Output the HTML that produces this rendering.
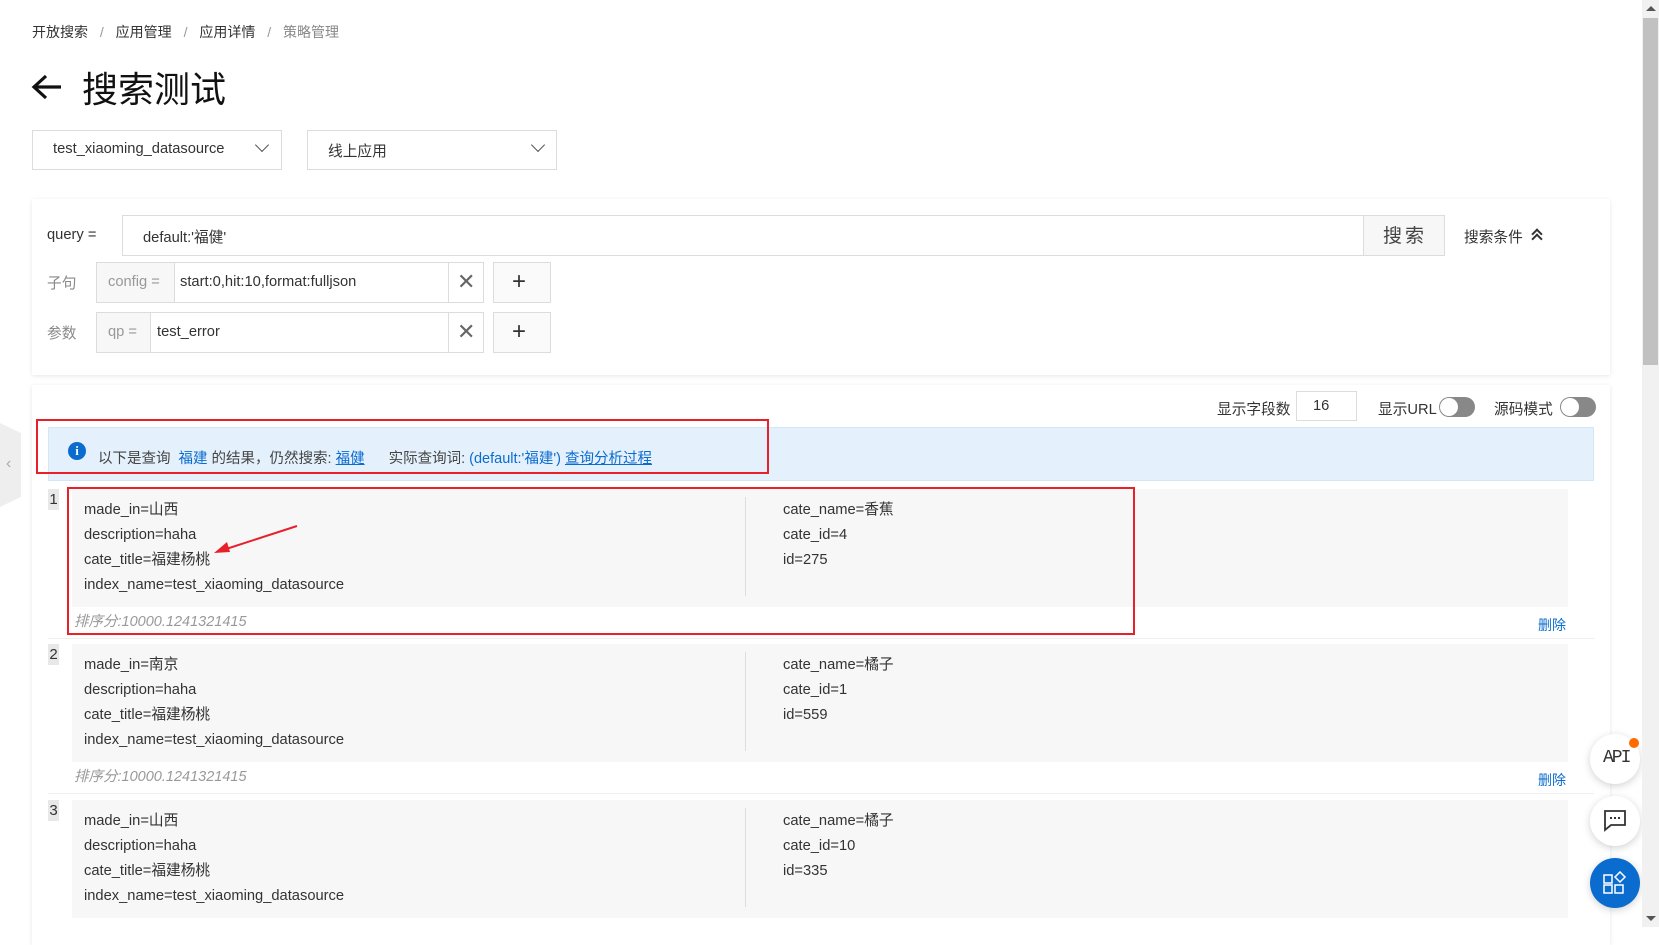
<!DOCTYPE html>
<html><head><meta charset="utf-8"><style>
*{box-sizing:border-box;margin:0;padding:0}
body{width:1659px;height:927px;overflow:hidden;background:#fff;font-family:"Liberation Sans","Noto Sans CJK SC",sans-serif;color:#333;font-size:14.7px;position:relative}
.a{position:absolute}
.box{position:absolute;border:1px solid #dcdcdc;background:#fff}
.chev{position:absolute;width:10px;height:10px;border-right:1.6px solid #555;border-bottom:1.6px solid #555;transform:rotate(45deg)}
.t{position:absolute;white-space:nowrap}
.card{position:absolute;left:72px;width:1496px;height:118px;background:#f7f7f7}
.num{position:absolute;left:48px;width:11px;height:21px;background:#e8e8e8;font-size:15px;line-height:21px;text-align:center;color:#333}
.x{position:absolute;font-size:22px;color:#666;line-height:1}
.tog{position:absolute;width:36px;height:20px;border-radius:10px;background:#888}
.tog:after{content:"";position:absolute;left:1px;top:1px;width:18px;height:18px;border-radius:50%;background:#fff}
.fb{position:absolute;width:50px;height:50px;border-radius:50%;background:#fff;box-shadow:0 2px 8px rgba(0,0,0,.18)}
.sc{position:absolute;left:74px;font-style:italic;color:#999;font-size:14.5px;white-space:nowrap}
</style></head><body>
<div class="t" style="left:32px;top:22px;font-size:14px;color:#333">开放搜索 <span style="color:#999;margin:0 8px">/</span> 应用管理 <span style="color:#999;margin:0 8px">/</span> 应用详情 <span style="color:#999;margin:0 8px">/</span> <span style="color:#888">策略管理</span></div>
<svg class="a" style="left:31px;top:73px" width="32" height="28" viewBox="0 0 32 28"><path d="M30 14H4M15 3L3 14l12 11" fill="none" stroke="#111" stroke-width="3.2"/></svg>
<div class="t" style="left:82px;top:61px;font-size:36px;color:#111">搜索测试</div>

<div class="box" style="left:32px;top:130px;width:250px;height:40px"></div>
<div class="t" style="left:53px;top:141px">test_xiaoming_datasource</div>
<div class="chev" style="left:257px;top:140px"></div>
<div class="box" style="left:307px;top:130px;width:250px;height:40px"></div>
<div class="t" style="left:328px;top:140px">线上应用</div>
<div class="chev" style="left:533px;top:140px"></div>

<div class="a" style="left:32px;top:199px;width:1578px;height:176px;background:#fff;box-shadow:0 1px 4px rgba(0,0,0,.1)"></div>
<div class="t" style="left:47px;top:227px">query =</div>
<div class="box" style="left:122px;top:215px;width:1242px;height:41px"></div>
<div class="t" style="left:143px;top:226px">default:'福健'</div>
<div class="box" style="left:1363px;top:215px;width:82px;height:41px;background:#f7f7f7"></div>
<div class="t" style="left:1383px;top:221px;font-size:19px;letter-spacing:3px;color:#444">搜索</div>
<div class="t" style="left:1464px;top:226px">搜索条件</div>
<div class="a" style="left:1533px;top:230px;width:8px;height:8px;border-left:2px solid #333;border-top:2px solid #333;transform:rotate(45deg)"></div>
<div class="a" style="left:1533px;top:235px;width:8px;height:8px;border-left:2px solid #333;border-top:2px solid #333;transform:rotate(45deg)"></div>

<div class="t" style="left:47px;top:272px;color:#888">子句</div>
<div class="box" style="left:96px;top:262px;width:388px;height:41px"></div>
<div class="a" style="left:97px;top:263px;width:78px;height:39px;background:#f7f7f7;border-right:1px solid #dcdcdc"></div>
<div class="t" style="left:108px;top:274px;color:#999">config =</div>
<div class="t" style="left:180px;top:274px">start:0,hit:10,format:fulljson</div>
<div class="a" style="left:448px;top:263px;width:1px;height:39px;background:#dcdcdc"></div>
<div class="x" style="left:457px;top:271px">✕</div>
<div class="box" style="left:493px;top:262px;width:58px;height:41px;background:#fafafa"></div>
<div class="t" style="left:512px;top:268px;font-size:24px;color:#333">+</div>

<div class="t" style="left:47px;top:322px;color:#888">参数</div>
<div class="box" style="left:96px;top:312px;width:388px;height:41px"></div>
<div class="a" style="left:97px;top:313px;width:54px;height:39px;background:#f7f7f7;border-right:1px solid #dcdcdc"></div>
<div class="t" style="left:108px;top:324px;color:#999">qp =</div>
<div class="t" style="left:157px;top:324px">test_error</div>
<div class="a" style="left:448px;top:313px;width:1px;height:39px;background:#dcdcdc"></div>
<div class="x" style="left:457px;top:321px">✕</div>
<div class="box" style="left:493px;top:312px;width:58px;height:41px;background:#fafafa"></div>
<div class="t" style="left:512px;top:318px;font-size:24px;color:#333">+</div>

<div class="a" style="left:32px;top:385px;width:1578px;height:560px;background:#fff;box-shadow:0 1px 4px rgba(0,0,0,.1)"></div>
<div class="a" style="left:0;top:423px;width:21px;height:84px;background:#eee;clip-path:polygon(0 0,100% 12%,100% 88%,0 100%)"></div>
<div class="t" style="left:6px;top:455px;color:#aaa;font-size:16px">‹</div>
<div class="t" style="left:1217px;top:398px">显示字段数</div>
<div class="box" style="left:1296px;top:391px;width:61px;height:30px"></div>
<div class="t" style="left:1313px;top:398px">16</div>
<div class="t" style="left:1378px;top:398px">显示URL</div>
<div class="tog" style="left:1439px;top:397px"></div>
<div class="t" style="left:1494px;top:398px">源码模式</div>
<div class="tog" style="left:1560px;top:397px"></div>

<div class="a" style="left:48px;top:427px;width:1546px;height:54px;background:#e4f1fc;border:1px solid #d5e6f5"></div>
<div class="a" style="left:68px;top:442px;width:18px;height:18px;border-radius:50%;background:#0a6ccf;color:#fff;font-size:13px;font-weight:bold;text-align:center;line-height:18px;font-family:'Liberation Serif',serif">i</div>
<div class="t" style="left:98px;top:447px;color:#444;font-size:14.5px">以下是查询 <span style="color:#0a6ccf;margin:0 4px">福建</span>的结果，仍然搜索: <span style="color:#0a6ccf;text-decoration:underline">福健</span><span style="margin-left:24px">实际查询词:</span> <span style="color:#0a6ccf">(default:'福建')</span> <span style="color:#0a6ccf;text-decoration:underline">查询分析过程</span></div>
<div class="a" style="left:36px;top:419px;width:733px;height:55px;border:2px solid #e8202a"></div>

<div class="num" style="top:489px">1</div>
<div class="card" style="top:489px"></div>
<div class="a" style="left:745px;top:497px;width:1px;height:99px;background:#ddd"></div>
<div class="t" style="left:84px;top:498px;line-height:25px">made_in=山西<br>description=haha<br>cate_title=福建杨桃<br>index_name=test_xiaoming_datasource</div>
<div class="t" style="left:783px;top:498px;line-height:25px">cate_name=香蕉<br>cate_id=4<br>id=275</div>
<div class="sc" style="top:610px">排序分:10000.1241321415</div>
<div class="t" style="left:1538px;top:615px;color:#0a6ccf;font-size:14px">删除</div>
<div class="a" style="left:48px;top:638px;width:1546px;height:1px;background:#eee"></div>
<div class="a" style="left:67px;top:487px;width:1068px;height:148px;border:2px solid #e8202a"></div>
<svg class="a" style="left:205px;top:520px" width="100" height="40"><path d="M92 6L18 30" stroke="#e8202a" stroke-width="2"/><path d="M9 33L22 22L25 32Z" fill="#e8202a"/></svg>

<div class="num" style="top:644px">2</div>
<div class="card" style="top:644px"></div>
<div class="a" style="left:745px;top:652px;width:1px;height:99px;background:#ddd"></div>
<div class="t" style="left:84px;top:653px;line-height:25px">made_in=南京<br>description=haha<br>cate_title=福建杨桃<br>index_name=test_xiaoming_datasource</div>
<div class="t" style="left:783px;top:653px;line-height:25px">cate_name=橘子<br>cate_id=1<br>id=559</div>
<div class="sc" style="top:765px">排序分:10000.1241321415</div>
<div class="t" style="left:1538px;top:770px;color:#0a6ccf;font-size:14px">删除</div>
<div class="a" style="left:48px;top:793px;width:1546px;height:1px;background:#eee"></div>

<div class="num" style="top:800px">3</div>
<div class="card" style="top:800px"></div>
<div class="a" style="left:745px;top:808px;width:1px;height:99px;background:#ddd"></div>
<div class="t" style="left:84px;top:809px;line-height:25px">made_in=山西<br>description=haha<br>cate_title=福建杨桃<br>index_name=test_xiaoming_datasource</div>
<div class="t" style="left:783px;top:809px;line-height:25px">cate_name=橘子<br>cate_id=10<br>id=335</div>

<div class="fb" style="left:1590px;top:734px"><div class="t" style="left:13px;top:14px;font-family:'Liberation Mono',monospace;font-size:18px;color:#333;letter-spacing:-2px">API</div></div>
<div class="a" style="left:1629px;top:738px;width:10px;height:10px;border-radius:50%;background:#ff6a00"></div>
<div class="fb" style="left:1590px;top:796px"><svg class="a" style="left:14px;top:14px" width="22" height="22"><path d="M1 1h20v14H7l-6 5z" fill="none" stroke="#333" stroke-width="1.8"/><path d="M6 8h2M10 8h2M14 8h2" stroke="#333" stroke-width="2"/></svg></div>
<div class="fb" style="left:1590px;top:858px;background:#0a6ccf"><svg class="a" style="left:13px;top:13px" width="24" height="24"><g fill="none" stroke="#fff" stroke-width="1.5"><rect x="1" y="4" width="8" height="8"/><rect x="1" y="14" width="8" height="8"/><rect x="12" y="14" width="8" height="8"/><path d="M17 1l5 5-5 5-5-5z"/></g></svg></div>

<div class="a" style="left:1642px;top:0;width:17px;height:927px;background:#f1f1f1"></div>
<div class="a" style="left:1643px;top:18px;width:15px;height:347px;background:#c1c1c1"></div>
<div class="a" style="left:1646px;top:6px;border:5px solid transparent;border-bottom-color:#555;border-top:0"></div>
<div class="a" style="left:1646px;top:916px;border:5px solid transparent;border-top-color:#555;border-bottom:0"></div>
</body></html>
